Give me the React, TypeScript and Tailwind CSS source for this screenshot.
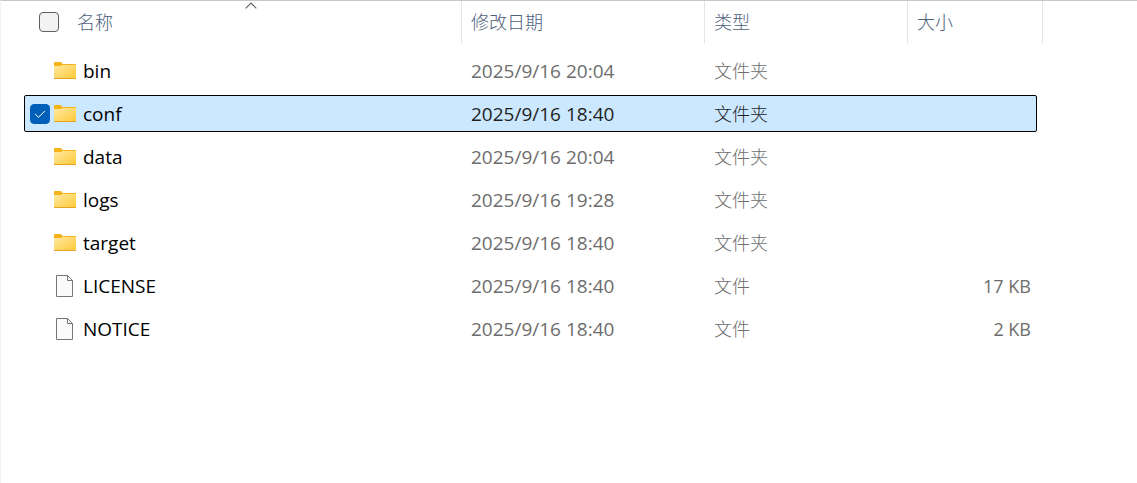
import { useState } from "react";

type Entry = {
    name: string;
    modified: string;
    kind: "folder" | "file";
    size?: string;
};

const entries: Entry[] = [
    { name: "bin", modified: "2025/9/16 20:04", kind: "folder" },
    { name: "conf", modified: "2025/9/16 18:40", kind: "folder" },
    { name: "data", modified: "2025/9/16 20:04", kind: "folder" },
    { name: "logs", modified: "2025/9/16 19:28", kind: "folder" },
    { name: "target", modified: "2025/9/16 18:40", kind: "folder" },
    { name: "LICENSE", modified: "2025/9/16 18:40", kind: "file", size: "17 KB" },
    { name: "NOTICE", modified: "2025/9/16 18:40", kind: "file", size: "2 KB" },
];

function FolderIcon() {
    return (
        <svg width="22" height="17" viewBox="0 0 22 17" aria-hidden="true">
            <defs>
                <linearGradient id="folder" x1="0" y1="0" x2="1" y2="1">
                    <stop offset="0" stopColor="#ffe9a2" />
                    <stop offset="1" stopColor="#ffc937" />
                </linearGradient>
            </defs>
            <path d="M0 1Q0 0 1 0H7L8.5 2H21.5L22 2.5V8H0Z" fill="#f5b31b" />
            <path d="M0 4H7L8 3H22V16.5L21.5 17H0.5L0 16.5Z" fill="url(#folder)" />
            <path d="M0 16H22V16.5L21.5 17H0.5L0 16.5Z" fill="#e6a322" />
        </svg>
    );
}

function FileIcon() {
    return (
        <svg width="17" height="22" viewBox="0 0 17 22" aria-hidden="true">
            <path d="M0.5 0.5H11.5L16.5 5.5V21.5H0.5Z" fill="#fafafa" stroke="#767676" />
            <path d="M11.5 0.5V5.5H16.5" fill="none" stroke="#767676" />
        </svg>
    );
}

export default function App() {
    const [selected, setSelected] = useState<string[]>(["conf"]);
    const [ascending, setAscending] = useState(true);

    const toggle = (name: string) =>
        setSelected((names) => (names.includes(name) ? names.filter((n) => n !== name) : [...names, name]));

    const rows = ascending ? entries : [...entries].reverse();

    return (
        <main className="min-h-screen overflow-x-auto border-t border-l border-t-[#c6c6c6] border-l-[#f3f3f3] bg-white font-['Open_Sans','Noto_Sans_CJK_SC',sans-serif] text-lg leading-7">
            <table className="block">
                <thead className="block text-[#4c607a]">
                    <tr className="flex h-[42px]">
                        <th className="relative flex w-[461px] shrink-0 items-center gap-[18px] border-r border-[#e5e5e5] pl-[38px] font-light">
                            <input
                                type="checkbox"
                                aria-label="全选"
                                checked={selected.length === entries.length}
                                onChange={(e) => setSelected(e.target.checked ? entries.map((n) => n.name) : [])}
                                className="size-5 appearance-none rounded border border-[#5f5f5f] bg-[#f3f3f3] checked:bg-[#005fb8]"
                            />
                            <button type="button" onClick={() => setAscending(!ascending)}>
                                名称
                            </button>
                            {/* Sort direction */}
                            <svg
                                width="12"
                                height="7"
                                viewBox="0 0 12 7"
                                aria-hidden="true"
                                className={`absolute top-px right-[204px] ${ascending ? "" : "rotate-180"}`}
                            >
                                <path d="M0.7 6.3L6 1L11.3 6.3" fill="none" stroke="#5f5f5f" strokeWidth="1.1" />
                            </svg>
                        </th>
                        <th className="flex w-[243px] shrink-0 items-center border-r border-[#e5e5e5] pl-[9px] font-light">
                            <button type="button">修改日期</button>
                        </th>
                        <th className="flex w-[203px] shrink-0 items-center border-r border-[#e5e5e5] pl-[9px] font-light">
                            <button type="button">类型</button>
                        </th>
                        <th className="flex w-[135px] shrink-0 items-center border-r border-[#e5e5e5] pl-[9px] font-light">
                            <button type="button">大小</button>
                        </th>
                    </tr>
                </thead>
                <tbody className="flex flex-col gap-[6px] pt-[9px] pl-[23px]">
                    {rows.map((entry) => {
                        const active = selected.includes(entry.name);
                        return (
                            <tr
                                key={entry.name}
                                className={`group flex h-[37px] w-[1013px] items-center rounded-xs border ${
                                    active ? "border-black bg-[#cce8ff] text-[#1f1f1f]" : "border-transparent text-[#6d6d6d]"
                                }`}
                            >
                                <td className="flex w-[437px] shrink-0 items-center pl-[5px] text-[19px]">
                                    <span className="mr-1 grid size-5 place-items-center">
                                        <input
                                            id={`select-${entry.name}`}
                                            type="checkbox"
                                            checked={active}
                                            onChange={() => toggle(entry.name)}
                                            className="col-start-1 row-start-1 size-5 appearance-none rounded border border-[#5f5f5f] bg-white opacity-0 group-hover:opacity-100 checked:border-[#005fb8] checked:bg-[#005fb8] checked:opacity-100"
                                        />
                                        {active && (
                                            <svg
                                                width="12"
                                                height="10"
                                                viewBox="0 0 12 10"
                                                aria-hidden="true"
                                                className="pointer-events-none z-10 col-start-1 row-start-1"
                                            >
                                                <path d="M1.2 5L4.5 8.3L11 1.8" fill="none" stroke="#fff" strokeWidth="1" />
                                            </svg>
                                        )}
                                    </span>
                                    <span className={`mr-[7px] flex w-[22px] ${entry.kind === "file" ? "pl-[2px]" : ""}`}>
                                        {entry.kind === "folder" ? <FolderIcon /> : <FileIcon />}
                                    </span>
                                    <label htmlFor={`select-${entry.name}`} className="text-black">
                                        {entry.name}
                                    </label>
                                </td>
                                <td className="w-[243px] shrink-0 pl-[9px] text-[19px]">{entry.modified}</td>
                                <td className="w-[203px] shrink-0 pl-[9px] font-light">
                                    {entry.kind === "folder" ? "文件夹" : "文件"}
                                </td>
                                <td className="grow pr-[5px] text-right">{entry.size}</td>
                            </tr>
                        );
                    })}
                </tbody>
            </table>
        </main>
    );
}
